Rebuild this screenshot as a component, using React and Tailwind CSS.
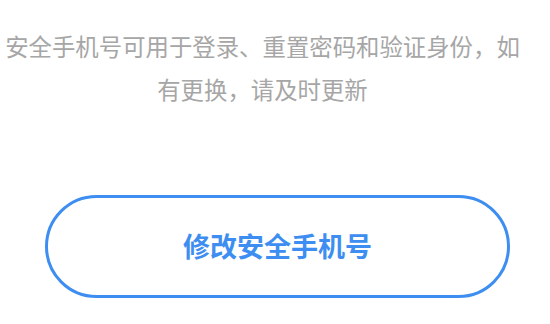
import React from 'react';

const App = () => {
    return (
        <div
            className="w-[550px] h-[324px] bg-white overflow-hidden"
            style={{ fontFamily: '"Noto Sans CJK SC", "Noto Sans", sans-serif' }}
        >
            {/* 提示文字 */}
            <p className="pt-[25px] ml-[2px] w-[521px] text-center text-[23.4px] leading-[43px] text-[#a6a6a6]">
                安全手机号可用于登录、重置密码和验证身份，如有更换，请及时更新
            </p>

            <div className="mt-[84px] px-[45px]">
                <button className="w-[465px] h-[103px] rounded-full border-[3px] border-[#3d8ef0] bg-white flex items-center justify-center text-[27px] font-bold text-[#3d8ef0]">
                    修改安全手机号
                </button>
            </div>
        </div>
    );
};

export default App;
